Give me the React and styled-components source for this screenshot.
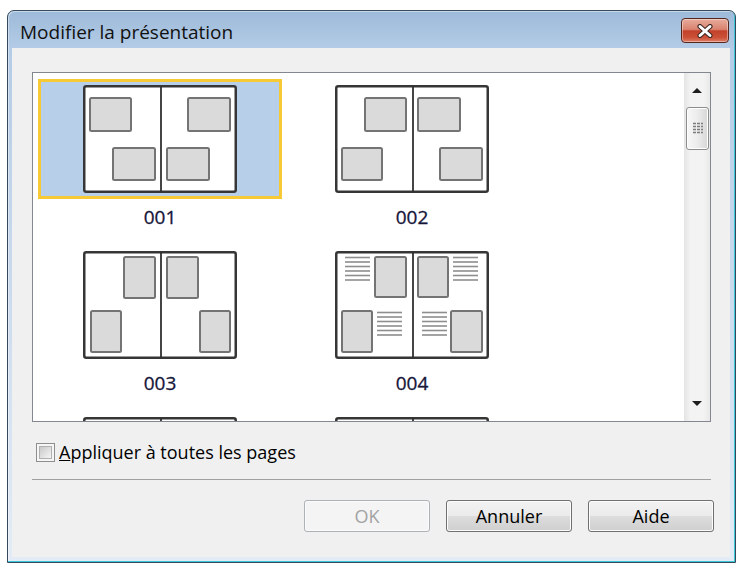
import styled, { createGlobalStyle } from "styled-components";

const GlobalStyle = createGlobalStyle`
  html, body {
    margin: 0;
    padding: 0;
    background: #fff;
  }
  body {
    font-family: "Open Sans", "Liberation Sans", sans-serif;
    color: #000;
  }
`;

const Window = styled.div`
  margin: 10px 0 0 7px;
  width: 729px;
  height: 553px;
  box-sizing: border-box;
  border: 1px solid #34495c;
  border-radius: 7px 7px 0 0;
  background: linear-gradient(180deg, #9dbad9 0%, #b4cce6 38px, #cddcee 55%, #e3ecf6 100%);
  box-shadow: inset -1px -1px 0 #3ec7d6, inset 1px 1px 0 rgba(255, 255, 255, 0.45);
  display: flex;
  flex-direction: column;
  overflow: hidden;
`;

const TitleBar = styled.div`
  height: 37px;
  flex: none;
  display: flex;
  align-items: flex-start;
  padding: 0 6px 0 12px;
`;

const Title = styled.div`
  padding-top: 4px;
  line-height: 34px;
  font-size: 19px;
  color: #111;
`;

const CloseButton = styled.div`
  margin: 7px 0 0 auto;
  width: 48px;
  height: 25px;
  box-sizing: border-box;
  border: 1px solid #55261e;
  border-radius: 4px;
  background: linear-gradient(180deg, #e8ab9c 0%, #d9836f 45%, #c2412a 52%, #cb5137 80%, #df7d66 100%);
  box-shadow: inset 0 0 0 1px rgba(255, 255, 255, 0.4);
  display: flex;
  align-items: center;
  justify-content: center;
`;

const Frame = styled.div`
  flex: 1;
  display: flex;
  padding: 0 5px 5px 4px;
`;

const Client = styled.div`
  flex: 1;
  background: #f0f0f0;
  padding: 24px 19px 0 20px;
  display: flex;
  flex-direction: column;
`;

const ListBox = styled.div`
  height: 350px;
  box-sizing: border-box;
  border: 1px solid #828790;
  background: #fff;
  display: flex;
`;

const ItemGrid = styled.div`
  flex: 1;
  overflow: hidden;
  display: grid;
  grid-template-columns: repeat(2, 244px);
  column-gap: 8px;
  row-gap: 10px;
  align-content: start;
  padding: 6px 5px;
`;

const Item = styled.div`
  display: flex;
  flex-direction: column;
  align-items: center;
`;

const ThumbBox = styled.div`
  width: 244px;
  height: 120px;
  box-sizing: border-box;
  border: 3px solid ${(p) => (p.$selected ? "#f6c935" : "transparent")};
  background: ${(p) => (p.$selected ? "#b8cfe9" : "transparent")};
  display: flex;
  align-items: center;
  justify-content: center;
`;

const ItemLabel = styled.div`
  line-height: 36px;
  font-size: 19px;
  color: #16163a;
  -webkit-text-stroke: 0.3px #16163a;
`;

const ScrollBar = styled.div`
  width: 26px;
  flex: none;
  display: flex;
  flex-direction: column;
  background: linear-gradient(90deg, #e4e4e4 0%, #f3f3f3 25%, #f3f3f3 75%, #e9e9e9 100%);
`;

const ArrowButton = styled.div`
  height: 34px;
  display: flex;
  align-items: center;
  justify-content: center;
`;

const ScrollThumb = styled.div`
  height: 43px;
  margin: 0 1px 0 2px;
  box-sizing: border-box;
  border: 1px solid #8d8d8d;
  border-radius: 3px;
  background: linear-gradient(90deg, #f7f7f7 0%, #ececec 50%, #d6d6d6 100%);
  box-shadow: inset 0 0 0 1px #fff;
  display: flex;
  align-items: center;
  justify-content: center;
`;

const ScrollTrack = styled.div`
  flex: 1;
`;

const CheckRow = styled.label`
  margin: 20px 0 0 4px;
  height: 20px;
  display: flex;
  align-items: center;
  gap: 4px;
  font-size: 18px;
`;

const CheckBox = styled.span`
  width: 19px;
  height: 19px;
  box-sizing: border-box;
  border: 1px solid #8f8f8f;
  background: #f6f6f6;
  padding: 2px;

  &::after {
    content: "";
    display: block;
    width: 100%;
    height: 100%;
    box-sizing: border-box;
    border: 1px solid #b0b0b0;
    background: linear-gradient(135deg, #c9c9c9, #f5f5f5);
  }
`;

const Separator = styled.div`
  margin-top: 17px;
  height: 1px;
  background: #a0a0a0;
`;

const ButtonRow = styled.div`
  margin: 20px -3px 0 0;
  display: flex;
  justify-content: flex-end;
  gap: 16px;
`;

const Button = styled.button`
  width: 126px;
  height: 32px;
  box-sizing: border-box;
  border: 1px solid ${(p) => (p.disabled ? "#adb2b5" : "#707070")};
  border-radius: 3px;
  background: ${(p) =>
    p.disabled
      ? "#f4f4f4"
      : "linear-gradient(180deg, #f2f2f2 0%, #ebebeb 50%, #dddddd 51%, #cfcfcf 100%)"};
  box-shadow: inset 0 0 0 1px ${(p) => (p.disabled ? "#fbfbfb" : "#fcfcfc")};
  font-family: inherit;
  font-size: 18px;
  color: ${(p) => (p.disabled ? "#a3a3a3" : "#000")};
  padding: 0;
`;

const layouts = [
  {
    id: "001",
    images: [[6, 12, 43, 35], [29, 62, 44, 34], [104, 12, 44, 35], [83, 62, 44, 34]],
  },
  {
    id: "002",
    images: [[29, 12, 43, 35], [82, 12, 44, 35], [6, 62, 42, 34], [104, 62, 44, 34]],
  },
  {
    id: "003",
    images: [[40, 5, 33, 43], [83, 5, 33, 43], [7, 59, 32, 43], [116, 59, 32, 43]],
  },
  {
    id: "004",
    images: [[39, 5, 33, 42], [82, 5, 32, 42], [6, 59, 32, 43], [115, 59, 33, 43]],
    lines: [[10, 6], [118, 6], [42, 61], [87, 61]],
  },
  {
    id: "005",
    images: [[8, 10, 62, 88], [85, 10, 62, 88]],
    hidden: true,
  },
  {
    id: "006",
    images: [[8, 10, 62, 40], [85, 58, 62, 40]],
    hidden: true,
  },
];

const Thumbnail = ({ images, lines = [] }) => (
  <svg width="154" height="108" viewBox="0 0 154 108">
    <rect x="1.25" y="1.25" width="151.5" height="105.5" rx="2" fill="#fff" stroke="#363636" strokeWidth="2.5" />
    <line x1="78" y1="1" x2="78" y2="107" stroke="#303030" strokeWidth="1.8" />
    {images.map(([x, y, w, h], i) => (
      <rect
        key={i}
        x={x + 1}
        y={y + 1}
        width={w - 2}
        height={h - 2}
        rx="1.5"
        fill="#dadada"
        stroke="#747474"
        strokeWidth="2"
      />
    ))}
    {lines.map(([x, y], i) =>
      [0, 1, 2, 3, 4, 5].map((n) => (
        <line
          key={`${i}-${n}`}
          x1={x}
          x2={x + 25}
          y1={y + n * 4.5 + 0.5}
          y2={y + n * 4.5 + 0.5}
          stroke="#8e8e8e"
          strokeWidth="1.6"
        />
      ))
    )}
  </svg>
);

const App = () => {
  return (
    <>
      <GlobalStyle />
      <Window>
        <TitleBar>
          <Title>Modifier la présentation</Title>
          <CloseButton>
            <svg width="18" height="14" viewBox="0 0 18 14">
              <path d="M4 2.5 L14 11.5 M14 2.5 L4 11.5" stroke="#3b2522" strokeWidth="5" strokeLinecap="round" />
              <path d="M4 2.5 L14 11.5 M14 2.5 L4 11.5" stroke="#fff" strokeWidth="3" strokeLinecap="round" />
            </svg>
          </CloseButton>
        </TitleBar>
        <Frame>
          <Client>
            <ListBox>
              <ItemGrid>
                {layouts.map((l, i) => (
                  <Item key={l.id}>
                    <ThumbBox $selected={i === 0}>
                      <Thumbnail images={l.images} lines={l.lines} />
                    </ThumbBox>
                    {!l.hidden && <ItemLabel>{l.id}</ItemLabel>}
                  </Item>
                ))}
              </ItemGrid>
              <ScrollBar>
                <ArrowButton>
                  <svg width="10" height="6" viewBox="0 0 10 6">
                    <path d="M0 6 L5 1 L10 6 Z" fill="#1e1e1e" />
                  </svg>
                </ArrowButton>
                <ScrollThumb>
                  <svg width="12" height="13" viewBox="0 0 12 13">
                    <path d="M1 1.5 H11 M1 4.5 H11 M1 7.5 H11 M1 10.5 H11" stroke="#7d7d7d" strokeWidth="1.4" strokeDasharray="3 1" />
                  </svg>
                </ScrollThumb>
                <ScrollTrack />
                <ArrowButton>
                  <svg width="10" height="6" viewBox="0 0 10 6">
                    <path d="M0 0 L10 0 L5 5 Z" fill="#1e1e1e" />
                  </svg>
                </ArrowButton>
              </ScrollBar>
            </ListBox>
            <CheckRow>
              <CheckBox />
              <span>
                <u>A</u>ppliquer à toutes les pages
              </span>
            </CheckRow>
            <Separator />
            <ButtonRow>
              <Button disabled>OK</Button>
              <Button>Annuler</Button>
              <Button>Aide</Button>
            </ButtonRow>
          </Client>
        </Frame>
      </Window>
    </>
  );
};

export default App;
